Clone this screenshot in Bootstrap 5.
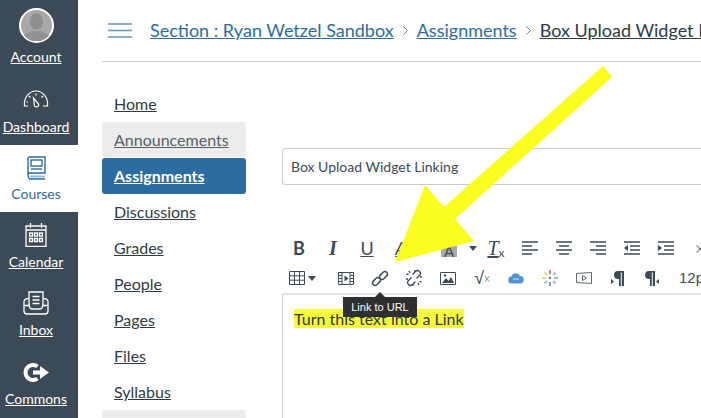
<!DOCTYPE html>
<html lang="en">
<head>
    <meta charset="UTF-8">
    <title>Box Upload Widget Linking</title>
    <link href="https://cdn.jsdelivr.net/npm/bootstrap@5.3.0/dist/css/bootstrap.min.css" rel="stylesheet">
    <style>
        html, body { height: 418px; overflow: hidden; }
        body { font-family: Lato, "Liberation Sans", sans-serif; color: #2d3b45; background: #fff; }
        .shell { height: 418px; width: 701px; overflow: hidden; }
        .global-nav { width: 78px; flex: none; background: #3c4a57; }
        .global-item { color: #fff; font-size: 14px; line-height: 16px; text-decoration: underline; padding-right: 6px; }
        .global-item svg { display: block; flex: none; }
        .gi-account { height: 73px; padding-top: 8px; }
        .gi-account span { margin-top: 6px; }
        .gi-dash { height: 72px; padding-top: 17px; }
        .gi-dash span { margin-top: 11px; }
        .gi-courses { height: 67px; padding-top: 11px; background: #fff; color: #2d6ca0; text-decoration: none; }
        .gi-courses span { margin-top: 6px; }
        .gi-cal, .gi-inbox { height: 68px; padding-top: 11px; }
        .gi-cal span, .gi-inbox span { margin-top: 7px; }
        .gi-commons { height: 70px; padding-top: 15px; }
        .gi-commons span { margin-top: 9px; }
        .crumb-bar { height: 62px; margin-left: 24px; border-bottom: 1px solid #c7cdd1; font-size: 18px; padding-left: 6px; gap: 18px; white-space: nowrap; }
        .crumb-bar a { color: #2d6ca0; }
        .crumb-bar .crumb-now { color: #2d3b45; text-decoration: underline; }
        .crumb-sep { margin: 0 9px; }
        .course-nav { width: 144px; margin-left: 24px; padding-top: 24px; flex: none; }
        .course-nav a { display: block; height: 36px; line-height: 36px; padding-left: 12px; font-size: 16px; color: #2d3b45; border-radius: 3px; }
        .course-nav a.muted { background: #ececec; color: #555f67; height: 35px; margin-bottom: 1px; }
        .course-nav a.active { background: #2d6ca0; color: #fff; font-weight: 700; }
        .course-nav .nav-stub { height: 20px; background: #ececec; border-radius: 3px; }
        .edit-pane { margin-left: 36px; padding-top: 86px; flex: none; width: 460px; }
        .title-input { height: 37px; border: 1px solid #c7cdd1; border-right: 0; border-radius: 3px 0 0 3px; padding: 0 8px; font-size: 14px; line-height: 35px; color: #3d4a57; }
        .tool-row { height: 30px; white-space: nowrap; }
        .tool-row.one { margin-top: 48px; }
        .tool-btn { width: 34px; height: 30px; flex: none; font-size: 18px; line-height: 1; color: #3d4a57; }
        .tool-btn.split { width: 61px; padding-left: 23px; gap: 12px; }
        .tool-btn.grid-btn { width: 47px; padding-right: 7px; gap: 3px; }
        .tool-serif { font-family: "Liberation Serif", serif; font-size: 20px; }
        .a-swatch { background: #a9a9a9; width: 16px; height: 11px; margin-top: 7px; font-size: 15px; line-height: 11px; text-align: center; display: block; }
        .tool-sm { font-size: 12px; }
        .tool-root { font-size: 18px; font-family: "DejaVu Sans", sans-serif; }
        .tool-strike { text-decoration: underline; font-style: italic; }
        .tool-size { padding-left: 10px; font-size: 15px; font-family: "Liberation Sans", sans-serif; color: #3d4a57; }
        .caret-down { width: 0; height: 0; border: 4px solid transparent; border-bottom: 0; border-top: 5px solid #3d4a57; }
        .editor-area { border-top: 2px solid #e3e6e8; border-left: 1px solid #c7cdd1; height: 130px; padding: 13px 11px; font-size: 16px; line-height: 22px; }
        .editor-area mark { background: #f6f93c; padding: 0; color: #2d3b45; }
        .url-tip { position: absolute; left: 343px; top: 297px; width: 74px; height: 20px; background: #2d2f31; color: #fff; font-size: 11px; line-height: 20px; text-align: center; font-family: "Liberation Sans", sans-serif; }
        .url-tip::before { content: ""; position: absolute; left: 32px; top: -5px; border: 5px solid transparent; border-top: 0; border-bottom-color: #2d2f31; }
        .arrow-over { position: absolute; left: 0; top: 0; pointer-events: none; }
    </style>
</head>
<body>
<div class="shell d-flex position-relative">
    <div class="global-nav d-flex flex-column">
        <div class="global-item gi-account d-flex flex-column align-items-center">
            <svg width="35" height="35" viewBox="0 0 35 35"><defs><clipPath id="av"><circle cx="17.500" cy="17.500" r="16"/></clipPath></defs><circle cx="17.500" cy="17.500" r="16.500" fill="#a8a8a8" stroke="#fff" stroke-width="2"/><g clip-path="url(#av)"><ellipse cx="17.500" cy="13.500" rx="6.500" ry="8" fill="#8e8e8e"/><path d="M2 33c1-7 8-8 11-10h9c3 2 10 3 11 10z" fill="#929292"/></g></svg>
            <span>Account</span>
        </div>
        <div class="global-item gi-dash d-flex flex-column align-items-center">
            <svg width="26" height="18" viewBox="0 0 26 18" fill="none" stroke="#fff" stroke-width="1.200"><path d="M5 16H1.500C.5 8 6 1 13 1s12.500 7 11.500 15H20"/><path d="M10.500 8l5 6c1 2.500-2.500 4-4 2z"/><path d="M13 3.500v2M6 6l1.500 1.500M20 6l-1.500 1.500M3.500 12H5"/></svg>
            <span>Dashboard</span>
        </div>
        <div class="global-item gi-courses d-flex flex-column align-items-center">
            <svg width="19" height="24" viewBox="0 0 19 24" fill="none" stroke="#2d6ca0" stroke-width="1.400"><path d="M1 19V3q0-2 2-2h15v16H3q-2 0-2 2.500T3 23h15"/><rect x="4" y="4" width="11" height="6"/><path d="M4 13h11"/><path d="M3 19.500h15v2H3z" fill="#8fc1e8" stroke="none"/></svg>
            <span>Courses</span>
        </div>
        <div class="global-item gi-cal d-flex flex-column align-items-center">
            <svg width="22" height="24" viewBox="0 0 22 24" fill="none" stroke="#fff" stroke-width="1.300"><path d="M1 3h20v20.500H1z"/><path d="M5.500 0v5M16.500 0v5M1 7h20"/><path d="M4.500 10h3v3h-3zM9.500 10h3v3h-3zM14.500 10h3v3h-3zM4.500 15.500h3v3h-3zM9.500 15.500h3v3h-3zM14.500 15.500h3v3h-3z"/></svg>
            <span>Calendar</span>
        </div>
        <div class="global-item gi-inbox d-flex flex-column align-items-center">
            <svg width="26" height="24" viewBox="0 0 26 24" fill="none" stroke="#fff" stroke-width="1.300"><path d="M6 15V1h14v14"/><path d="M9.500 5.500h7M9.500 9h7M9.500 12.500h7"/><path d="M5.500 7.500Q1 8 1 11v9q0 3 3 3h18q3 0 3-3v-9q0-3-4.500-3.500"/><path d="M1 14.500h5q1 3.500 3 3.500h8q2 0 3-3.500h5"/></svg>
            <span>Inbox</span>
        </div>
        <div class="global-item gi-commons d-flex flex-column align-items-center">
            <svg width="26" height="19" viewBox="0 0 26 19"><path d="M14.500 3.500a7.500 7.500 0 1 0 0 12" fill="none" stroke="#fff" stroke-width="4"/><path d="M10 7.500h7V3l9 6.500-9 6.500v-4.500h-7z" fill="#fff"/></svg>
            <span>Commons</span>
        </div>
    </div>
    <div class="flex-grow-1 overflow-hidden">
        <div class="crumb-bar d-flex align-items-center">
            <svg width="24" height="15" viewBox="0 0 24 15" stroke="#6a93b7" stroke-width="1.600" class="flex-shrink-0"><path d="M0 1h24M0 7.500h24M0 14h24"/></svg>
            <div class="d-flex align-items-center"><a href="#">Section : Ryan Wetzel Sandbox</a><svg class="crumb-sep" width="5" height="9" viewBox="0 0 5 9" fill="none" stroke="#73818c"><path d="M.5.500l4 4-4 4"/></svg><a href="#">Assignments</a><svg class="crumb-sep" width="5" height="9" viewBox="0 0 5 9" fill="none" stroke="#73818c"><path d="M.5.500l4 4-4 4"/></svg><span class="crumb-now">Box Upload Widget Linking</span></div>
        </div>
        <div class="d-flex">
            <div class="course-nav">
                <a href="#">Home</a>
                <a href="#" class="muted">Announcements</a>
                <a href="#" class="active">Assignments</a>
                <a href="#">Discussions</a>
                <a href="#">Grades</a>
                <a href="#">People</a>
                <a href="#">Pages</a>
                <a href="#">Files</a>
                <a href="#">Syllabus</a>
                <div class="nav-stub"></div>
            </div>
            <div class="edit-pane">
                <div class="title-input">Box Upload Widget Linking</div>
                <div class="tool-row one d-flex">
                    <span class="tool-btn d-flex align-items-center justify-content-center fw-bold">B</span>
                    <span class="tool-btn d-flex align-items-center justify-content-center fst-italic fw-bold tool-serif">I</span>
                    <span class="tool-btn d-flex align-items-center justify-content-center text-decoration-underline">U</span>
                    <span class="tool-btn d-flex align-items-center justify-content-center tool-strike">A</span>
                    <span class="tool-btn split d-flex align-items-center"><span class="a-swatch">A</span><span class="caret-down"></span></span>
                    <span class="tool-btn d-flex align-items-center justify-content-center"><span class="tool-serif fst-italic text-decoration-underline">T</span><span class="tool-sm align-self-end mb-1">x</span></span>
                    <span class="tool-btn d-flex align-items-center justify-content-center"><svg width="16" height="14" viewBox="0 0 16 14" stroke="#3d4a57" stroke-width="1.600"><path d="M0 1h16M0 5h10M0 9h16M0 13h10"/></svg></span>
                    <span class="tool-btn d-flex align-items-center justify-content-center"><svg width="16" height="14" viewBox="0 0 16 14" stroke="#3d4a57" stroke-width="1.600"><path d="M0 1h16M3 5h10M0 9h16M3 13h10"/></svg></span>
                    <span class="tool-btn d-flex align-items-center justify-content-center"><svg width="16" height="14" viewBox="0 0 16 14" stroke="#3d4a57" stroke-width="1.600"><path d="M0 1h16M6 5h10M0 9h16M6 13h10"/></svg></span>
                    <span class="tool-btn d-flex align-items-center justify-content-center"><svg width="16" height="14" viewBox="0 0 16 14" stroke="#3d4a57" stroke-width="1.600"><path d="M0 1h16M6 5h10M6 9h10M0 13h16"/><path d="M4 4v6L0 7z" fill="#3d4a57" stroke="none"/></svg></span>
                    <span class="tool-btn d-flex align-items-center justify-content-center"><svg width="16" height="14" viewBox="0 0 16 14" stroke="#3d4a57" stroke-width="1.600"><path d="M0 1h16M6 5h10M6 9h10M0 13h16"/><path d="M0 4v6l4-3z" fill="#3d4a57" stroke="none"/></svg></span>
                    <span class="tool-btn d-flex align-items-center justify-content-center fw-light">×</span>
                </div>
                <div class="tool-row d-flex">
                    <span class="tool-btn grid-btn d-flex align-items-center justify-content-center"><svg width="16" height="14" viewBox="0 0 16 14" fill="none" stroke="#3d4a57"><path d="M.5.500h15v13H.5zM.5 4.800h15M.5 9.200h15M5.500.5v13M10.500.5v13"/></svg><span class="caret-down"></span></span>
                    <span class="tool-btn d-flex align-items-center justify-content-center"><svg width="16" height="13" viewBox="0 0 16 13" fill="none" stroke="#3d4a57"><path d="M.5.500h15v12H.5zM4 .5v12M12 .5v12M.5 3.500H4M.5 6.500H4M.5 9.500H4M12 3.500h3.500M12 6.500h3.500M12 9.500h3.500"/><path d="M6.500 3.500v6l4-3z" fill="#3d4a57" stroke="none"/></svg></span>
                    <span class="tool-btn d-flex align-items-center justify-content-center"><svg width="18" height="17" viewBox="0 0 18 17" fill="none" stroke="#3d4a57" stroke-width="1.500"><rect x="-4.500" y="-2.500" width="9" height="5" rx="2.500" transform="translate(5.500 11.500) rotate(-45)"/><rect x="-4.500" y="-2.500" width="9" height="5" rx="2.500" transform="translate(12.500 5.500) rotate(-45)"/></svg></span>
                    <span class="tool-btn d-flex align-items-center justify-content-center"><svg width="18" height="18" viewBox="0 0 18 18" fill="none" stroke="#3d4a57" stroke-width="1.300"><path d="M7.500 5.500l3-3a2.800 2.800 0 0 1 4 4l-3 3M10.500 12.500l-3 3a2.800 2.800 0 0 1-4-4l3-3"/><path d="M4 2l1 2M1.500 5l2 .5M14 16l-1-2M16.500 13l-2-.5M10 1v2M8 17v-2M17 8h-2M1 10h2"/></svg></span>
                    <span class="tool-btn d-flex align-items-center justify-content-center"><svg width="16" height="13" viewBox="0 0 16 13"><path d="M.5.500h15v12H.5z" fill="none" stroke="#3d4a57"/><path d="M2 11l4-5 2.500 3L11 5l3 6z" fill="#3d4a57"/><circle cx="5" cy="3.500" r="1.200" fill="#3d4a57"/></svg></span>
                    <span class="tool-btn d-flex align-items-center justify-content-center tool-sm fw-light"><span class="tool-root">√</span>x</span>
                    <span class="tool-btn d-flex align-items-center justify-content-center"><svg width="16" height="12" viewBox="0 0 16 12"><path d="M4 11.500a3.500 3.500 0 0 1-.5-7 4.500 4.500 0 0 1 8.500-.5 3.700 3.700 0 0 1 0 7.500z" fill="#4f94cf"/><path d="M5 7h6" stroke="#cfe3f3"/></svg></span>
                    <span class="tool-btn d-flex align-items-center justify-content-center"><svg width="16" height="16" viewBox="0 0 16 16" stroke-width="1.600"><path d="M8 0v4" stroke="#d9534f"/><path d="M8 12v4" stroke="#4f94cf"/><path d="M12 8h4" stroke="#7cb98b"/><path d="M0 8h4" stroke="#e9c46a"/><path d="M2.500 2.500l2.500 2.500" stroke="#e9c46a"/><path d="M13.500 2.500L11 5" stroke="#7cb98b"/><path d="M2.500 13.500L5 11" stroke="#6fb8d6"/><path d="M13.500 13.500L11 11" stroke="#b58ad6"/><circle cx="8" cy="8" r="1" fill="#3d4a57"/></svg></span>
                    <span class="tool-btn d-flex align-items-center justify-content-center"><svg width="16" height="12" viewBox="0 0 16 12" fill="none" stroke="#5c6870"><path d="M.5 1.500l15-1v11l-15-1z"/><path d="M6.500 3.500v5l4-2.500z"/></svg></span>
                    <span class="tool-btn d-flex align-items-center justify-content-center"><svg width="14" height="15" viewBox="0 0 14 15"><path d="M13 0H7a4 4 0 0 0 0 8h1v7h1.800V1.500h1V15H13z" fill="#3d4a57"/><path d="M0 8v5l3-2.500z" fill="#3d4a57"/></svg></span>
                    <span class="tool-btn d-flex align-items-center justify-content-center"><svg width="14" height="15" viewBox="0 0 14 15"><path d="M10 0H4a4 4 0 0 0 0 8h1v7h1.800V1.500h1V15H10z" fill="#3d4a57"/><path d="M14 8v5l-3-2.500z" fill="#3d4a57"/></svg></span>
                    <span class="tool-size d-flex align-items-center">12pt</span>
                </div>
                <div class="editor-area"><mark>Turn this text into a Link</mark></div>
            </div>
        </div>
    </div>
    <svg class="arrow-over" width="701" height="418" viewBox="0 0 701 418"><polygon points="603,66 612,77 455,219 474,241 395,262 425,185 444,207" fill="#fbff1f"/></svg>
    <div class="url-tip">Link to URL</div>
</div>
<script src="https://cdn.jsdelivr.net/npm/bootstrap@5.3.0/dist/js/bootstrap.bundle.min.js"></script>
</body>
</html>
